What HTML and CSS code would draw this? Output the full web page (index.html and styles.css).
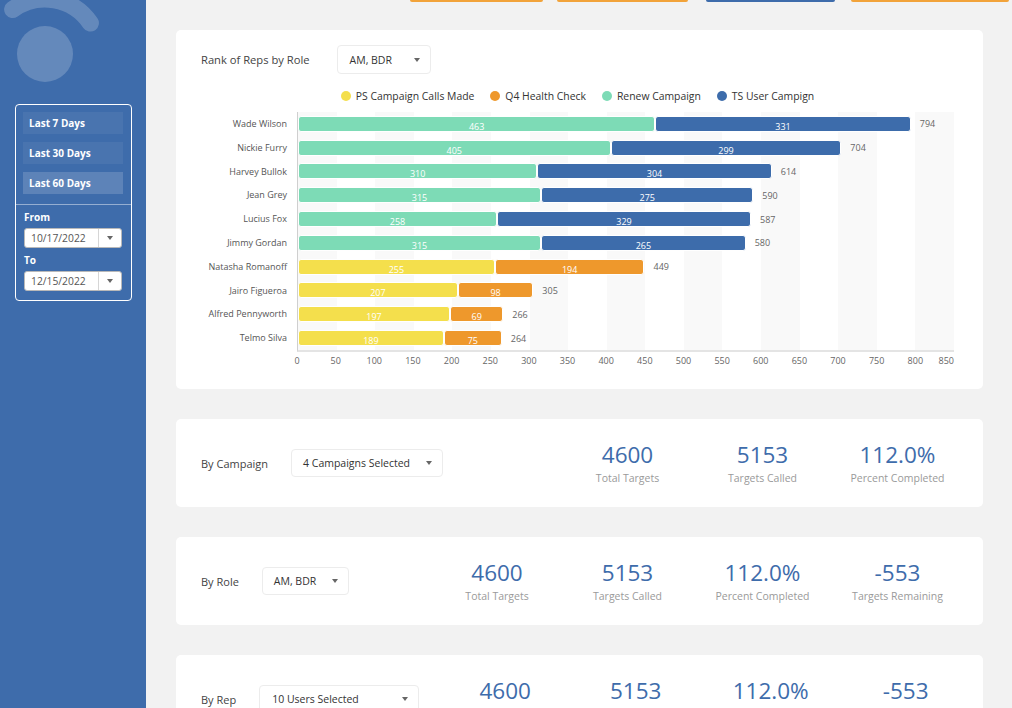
FILE: index.html
```html
<!DOCTYPE html>
<html>
<head>
<meta charset="utf-8">
<link rel="stylesheet" href="styles.css">
</head>
<body>
<div class="app">
  <aside class="sidebar">
    <svg class="logo" width="146" height="96" viewBox="0 0 146 96">
      <path d="M 12.6 9.5 A 55 55 0 0 1 90.4 23.1" fill="none" stroke="rgba(255,255,255,0.2)" stroke-width="17" stroke-linecap="round"/>
      <circle cx="45" cy="54" r="28" fill="rgba(255,255,255,0.2)"/>
    </svg>
    <div class="datebox">
      <div class="ranges">
        <div class="range">Last 7 Days</div>
        <div class="range">Last 30 Days</div>
        <div class="range active">Last 60 Days</div>
      </div>
      <div class="dates">
        <div class="dlabel">From</div>
        <div class="dinput"><span class="dval">10/17/2022</span><span class="dbtn"><i class="caret"></i></span></div>
        <div class="dlabel">To</div>
        <div class="dinput"><span class="dval">12/15/2022</span><span class="dbtn"><i class="caret"></i></span></div>
      </div>
    </div>
  </aside>
  <main class="main">
    <div class="topbar">
      <div class="tbtn orange w1"></div>
      <div class="tbtn orange w2"></div>
      <div class="tbtn blue w3"></div>
      <div class="tbtn orange w4"></div>
    </div>

    <section class="card chart-card">
      <div class="chart-head">
        <div class="ctitle">Rank of Reps by Role</div>
        <div class="dd dd-role1"><span>AM, BDR</span><i class="caret"></i></div>
      </div>
      <div class="legend">
        <div class="litem"><i class="dot yellow"></i>PS Campaign Calls Made</div>
        <div class="litem"><i class="dot orange"></i>Q4 Health Check</div>
        <div class="litem"><i class="dot green"></i>Renew Campaign</div>
        <div class="litem"><i class="dot blue"></i>TS User Campign</div>
      </div>
      <div class="chart">
        <div class="names">
          <div class="name">Wade Wilson</div>
          <div class="name">Nickie Furry</div>
          <div class="name">Harvey Bullok</div>
          <div class="name">Jean Grey</div>
          <div class="name">Lucius Fox</div>
          <div class="name">Jimmy Gordan</div>
          <div class="name">Natasha Romanoff</div>
          <div class="name">Jairo Figueroa</div>
          <div class="name">Alfred Pennyworth</div>
          <div class="name">Telmo Silva</div>
        </div>
        <div class="plotwrap">
          <div class="plot">
            <div class="row"><div class="seg green" style="width:54.47%">463</div><div class="seg blue" style="width:38.94%">331</div><span class="total">794</span></div>
            <div class="row"><div class="seg green" style="width:47.65%">405</div><div class="seg blue" style="width:35.18%">299</div><span class="total">704</span></div>
            <div class="row"><div class="seg green" style="width:36.47%">310</div><div class="seg blue" style="width:35.76%">304</div><span class="total">614</span></div>
            <div class="row"><div class="seg green" style="width:37.06%">315</div><div class="seg blue" style="width:32.35%">275</div><span class="total">590</span></div>
            <div class="row"><div class="seg green" style="width:30.35%">258</div><div class="seg blue" style="width:38.71%">329</div><span class="total">587</span></div>
            <div class="row"><div class="seg green" style="width:37.06%">315</div><div class="seg blue" style="width:31.18%">265</div><span class="total">580</span></div>
            <div class="row"><div class="seg yellow" style="width:30.00%">255</div><div class="seg orange" style="width:22.82%">194</div><span class="total">449</span></div>
            <div class="row"><div class="seg yellow" style="width:24.35%">207</div><div class="seg orange" style="width:11.53%">98</div><span class="total">305</span></div>
            <div class="row"><div class="seg yellow" style="width:23.18%">197</div><div class="seg orange" style="width:8.12%">69</div><span class="total">266</span></div>
            <div class="row"><div class="seg yellow" style="width:22.24%">189</div><div class="seg orange" style="width:8.82%">75</div><span class="total">264</span></div>
          </div>
          <div class="axis">
            <span class="tick" style="left:0%">0</span>
            <span class="tick" style="left:5.882%">50</span>
            <span class="tick" style="left:11.765%">100</span>
            <span class="tick" style="left:17.647%">150</span>
            <span class="tick" style="left:23.529%">200</span>
            <span class="tick" style="left:29.412%">250</span>
            <span class="tick" style="left:35.294%">300</span>
            <span class="tick" style="left:41.176%">350</span>
            <span class="tick" style="left:47.059%">400</span>
            <span class="tick" style="left:52.941%">450</span>
            <span class="tick" style="left:58.824%">500</span>
            <span class="tick" style="left:64.706%">550</span>
            <span class="tick" style="left:70.588%">600</span>
            <span class="tick" style="left:76.471%">650</span>
            <span class="tick" style="left:82.353%">700</span>
            <span class="tick" style="left:88.235%">750</span>
            <span class="tick" style="left:94.118%">800</span>
            <span class="tick last" style="left:100%">850</span>
          </div>
        </div>
      </div>
    </section>

    <section class="card stat-card">
      <div class="slabel">By Campaign</div>
      <div class="dd dd-camp"><span>4 Campaigns Selected</span><i class="caret"></i></div>
      <div class="stats">
        <div class="stat"><div class="num">4600</div><div class="sub">Total Targets</div></div>
        <div class="stat"><div class="num">5153</div><div class="sub">Targets Called</div></div>
        <div class="stat"><div class="num">112.0%</div><div class="sub">Percent Completed</div></div>
      </div>
    </section>

    <section class="card stat-card">
      <div class="slabel">By Role</div>
      <div class="dd dd-role"><span>AM, BDR</span><i class="caret"></i></div>
      <div class="stats">
        <div class="stat first"><div class="num">4600</div><div class="sub">Total Targets</div></div>
        <div class="stat"><div class="num">5153</div><div class="sub">Targets Called</div></div>
        <div class="stat"><div class="num">112.0%</div><div class="sub">Percent Completed</div></div>
        <div class="stat"><div class="num">-553</div><div class="sub">Targets Remaining</div></div>
      </div>
    </section>

    <section class="card stat-card">
      <div class="slabel">By Rep</div>
      <div class="dd dd-rep"><span>10 Users Selected</span><i class="caret"></i></div>
      <div class="stats">
        <div class="stat first"><div class="num">4600</div><div class="sub">Total Targets</div></div>
        <div class="stat"><div class="num">5153</div><div class="sub">Targets Called</div></div>
        <div class="stat"><div class="num">112.0%</div><div class="sub">Percent Completed</div></div>
        <div class="stat"><div class="num">-553</div><div class="sub">Targets Remaining</div></div>
      </div>
    </section>
  </main>
</div>
</body>
</html>
```

FILE: styles.css
```css
* { box-sizing: border-box; }
html, body { margin: 0; padding: 0; }
body {
  background: #f2f2f2;
  font-family: "Open Sans", "Liberation Sans", sans-serif;
  color: #444;
  width: 1012px;
  height: 708px;
  overflow: hidden;
}
.app { display: flex; width: 1012px; height: 708px; overflow: hidden; }

/* sidebar */
.sidebar {
  width: 146px;
  flex-shrink: 0;
  background: #3e6cab;
  display: flex;
  flex-direction: column;
  align-items: flex-start;
}
.logo { display: block; }
.datebox {
  margin: 8px 0 0 15px;
  width: 117px;
  border: 1px solid #fff;
  border-radius: 4px;
}
.ranges {
  padding: 7px 8px 10px 7px;
  display: flex;
  flex-direction: column;
  gap: 8px;
  border-bottom: 1px solid rgba(255,255,255,0.45);
}
.range {
  height: 22px;
  line-height: 22px;
  padding-left: 6px;
  background: rgba(255,255,255,0.06);
  color: #fff;
  font-weight: 700;
  font-size: 10px;
}
.range.active { background: rgba(255,255,255,0.16); }
.dates { padding: 5px 8px 9px 8px; }
.dlabel {
  color: #fff;
  font-weight: 700;
  font-size: 10px;
  line-height: 14px;
  margin-bottom: 4px;
}
.dinput + .dlabel { margin-top: 5px; }
.dinput {
  height: 20px;
  width: 98px;
  background: #fff;
  border: 1px solid #b9b9b9;
  border-radius: 3px;
  display: flex;
  align-items: center;
}
.dval {
  flex: 1;
  padding-left: 6px;
  font-size: 10.3px;
  color: #555;
}
.dbtn {
  width: 23px;
  height: 100%;
  border-left: 1px solid #d6d6d6;
  display: flex;
  align-items: center;
  justify-content: center;
}
.caret {
  display: block;
  flex-shrink: 0;
  width: 0;
  height: 0;
  border-left: 3.5px solid transparent;
  border-right: 3.5px solid transparent;
  border-top: 4px solid #666;
}

/* main */
.main {
  flex: 1;
  min-width: 0;
  padding: 0 29px 0 30px;
  display: flex;
  flex-direction: column;
  gap: 30px;
}
.topbar {
  height: 2px;
  margin-right: -26px;
  margin-bottom: -2px;
  display: flex;
  justify-content: flex-end;
  align-items: flex-end;
}
.tbtn { height: 2px; border-radius: 0 0 2px 2px; }
.tbtn.orange { background: #f2a33a; }
.tbtn.blue { background: #3e6cab; }
.w1 { width: 133px; margin-right: 14px; }
.w2 { width: 131px; margin-right: 18px; }
.w3 { width: 129px; margin-right: 16px; }
.w4 { width: 158px; }

.card {
  background: #fff;
  border-radius: 5px;
  flex-shrink: 0;
}

/* chart card */
.chart-card { padding: 15px 29px 15px 25px; }
.chart-head { display: flex; align-items: center; gap: 27px; }
.ctitle { font-size: 11.2px; color: #444; }
.dd {
  flex-shrink: 0;
  height: 29px;
  border: 1px solid #ececec;
  border-radius: 4px;
  display: flex;
  align-items: center;
  justify-content: space-between;
  padding: 0 10px 0 11px;
  font-size: 10.5px;
  color: #333;
  background: #fff;
  white-space: nowrap;
}
.dd-role1 { width: 94px; padding-left: 12px; }
.dd-camp { width: 152px; height: 28px; }
.dd-role { width: 87px; height: 28px; }
.dd-rep { width: 160px; height: 28px; padding-left: 12px; }

.legend {
  margin-top: 15px;
  display: flex;
  justify-content: center;
  gap: 16px;
  font-size: 10.4px;
  line-height: 14px;
  color: #333;
}
.litem { display: flex; align-items: center; gap: 5px; }
.dot { display: block; width: 10px; height: 10px; border-radius: 50%; }
.dot.yellow, .seg.yellow { background-color: #f4df4c; }
.dot.orange, .seg.orange { background-color: #ee982c; }
.dot.green, .seg.green { background-color: #7ddbb6; }
.dot.blue, .seg.blue { background-color: #3d6cab; }

.chart { margin-top: 9px; display: flex; }
.names {
  width: 86px;
  margin-right: 10px;
  display: flex;
  flex-direction: column;
}
.name {
  height: 23.8px;
  line-height: 23.8px;
  text-align: right;
  font-size: 9px;
  color: #555;
  white-space: nowrap;
}
.plotwrap { flex: 1; }
.plot {
  height: 240px;
  border-left: 1px solid #cfcfcf;
  border-bottom: 2px solid #e4e4e4;
  background: repeating-linear-gradient(90deg, #f9f9f9 0, #f9f9f9 5.882%, #fff 5.882%, #fff 11.765%);
  display: flex;
  flex-direction: column;
}
.row {
  height: 23.8px;
  display: flex;
  align-items: center;
}
.seg {
  height: 16px;
  border: 1px solid #fff;
  border-radius: 3px;
  color: #fff;
  font-size: 9px;
  line-height: 11px;
  padding-top: 4px;
  text-align: center;
  overflow: hidden;
}
.total {
  margin-left: 9px;
  font-size: 9px;
  color: #666;
}
.axis {
  position: relative;
  height: 22px;
}
.tick {
  position: absolute;
  top: 3px;
  transform: translateX(-50%);
  font-size: 9px;
  line-height: 12px;
  color: #666;
}
.tick.last { transform: translateX(-100%); }

/* stat cards */
.stat-card {
  height: 88px;
  padding: 0 18px 0 25px;
  display: flex;
  align-items: center;
  gap: 23px;
}
.slabel { font-size: 11px; color: #444; white-space: nowrap; flex-shrink: 0; }
.stats { margin-left: auto; display: flex; }
.stat { width: 135px; text-align: center; }
.stat.first { width: 126px; }
.num {
  font-size: 22.5px;
  line-height: 26px;
  color: #3e6cab;
}
.sub {
  margin-top: 3px;
  font-size: 10.5px;
  line-height: 14px;
  color: #9a9a9a;
  white-space: nowrap;
}
```
